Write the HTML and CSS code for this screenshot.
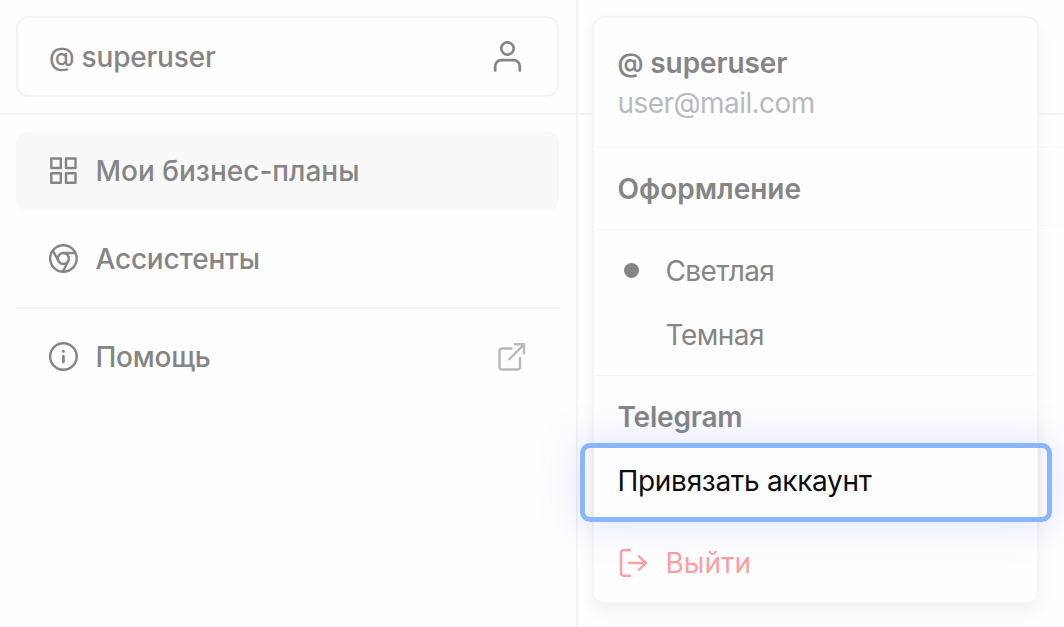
FILE: index.html
```html
<!DOCTYPE html>
<html lang="ru">
<head>
<meta charset="utf-8">
<title>Мои бизнес-планы</title>
<link rel="stylesheet" href="styles.css">
</head>
<body>
<div class="app">
  <aside class="sidebar">
    <header class="sidebar-head">
      <button class="account">
        <span class="t-account"><span class="at">@</span> superuser</span>
        <svg class="icon-user" width="30" height="32" viewBox="0 0 30 32"><circle cx="14.500" cy="7.500" r="6.2"/><path d="M2.200 29.500v-4.300a6 6 0 0 1 6-6h12.600a6 6 0 0 1 6 6v4.300"/></svg>
      </button>
    </header>
    <nav class="nav">
      <a class="nav-item active">
        <svg class="icon" width="30" height="30" viewBox="0 0 30 30"><path d="M3.300 2.500h9.500V12H3.300zM18 2.500h9.500V12H18zM3.300 17.200h9.500v9.500H3.300zM18 17.200h9.500v9.500H18z"/></svg>
        <span class="t-plans">Мои бизнес-планы</span>
      </a>
      <a class="nav-item">
        <svg class="icon" width="30" height="30" viewBox="0 0 30 30"><circle cx="15.400" cy="14.500" r="13.3"/><circle cx="15.400" cy="14.500" r="5.500"/><path d="M15.400 9H27.300M10.600 17.300L5 6.800M20.200 17.300l-5.300 10.300"/></svg>
        <span class="t-assist">Ассистенты</span>
      </a>
      <hr class="nav-line">
      <a class="nav-item">
        <svg class="icon" width="30" height="30" viewBox="0 0 30 30"><circle cx="15.400" cy="14.500" r="13.3"/><path d="M15.400 14v6" stroke-width="2.7"/><circle class="dot" cx="15.400" cy="9.3" r="1.5"/></svg>
        <span class="t-help">Помощь</span>
        <svg class="icon-ext" width="30" height="30" viewBox="0 0 30 30"><path d="M15.400 6.500H6A2.500 2.500 0 0 0 3.500 9v16A2.500 2.500 0 0 0 6 27.500h15.500A2.500 2.500 0 0 0 24 25v-9M19 2.300h9v9M27.500 2.800L13 17.500"/></svg>
      </a>
    </nav>
  </aside>
  <main class="content">
    <div class="row row-head"></div>
    <div class="row row-sub"></div>
    <div class="row row-list"></div>
  </main>
</div>
<div class="menu">
  <div class="profile">
    <div class="name"><span class="t-name"><span class="at">@</span> superuser</span></div>
    <div class="mail"><span class="t-mail">user@mail.com</span></div>
  </div>
  <div class="title"><span class="t-look">Оформление</span></div>
  <div class="themes">
    <div class="option"><i class="bullet"></i><span class="t-light">Светлая</span></div>
    <div class="option"><i class="bullet off"></i><span class="t-dark">Темная</span></div>
  </div>
  <div class="telegram"><span class="t-tg">Telegram</span></div>
  <div class="link"><div class="focus"></div><span class="t-link">Привязать аккаунт</span></div>
  <div class="logout">
    <svg class="icon-out" width="30" height="30" viewBox="0 0 30 30"><path d="M12 2.300H5.500A2.500 2.500 0 0 0 3 4.800v20.400a2.500 2.500 0 0 0 2.500 2.500H12M11 15H28M21 8.300l7 6.700-7 6.700"/></svg>
    <span class="t-out">Выйти</span>
  </div>
</div>
</body>
</html>
```
FILE: styles.css
```css
* { box-sizing: border-box; }
body {
  margin: 0;
  position: relative;
  height: 627px;
  overflow: hidden;
  background: #fefefe;
  color: #858585;
  font: 500 28px/40px Inter, "Noto Sans", sans-serif;
}
span { white-space: nowrap; }
svg { display: block; flex: none; fill: none; stroke: currentColor; stroke-width: 2.4; stroke-linecap: round; stroke-linejoin: round; }
.dot { fill: currentColor; stroke: none; }
.app { display: flex; height: 627px; }
.sidebar { width: 578px; border-right: 2px solid #f2f2f2; flex: none; }
.sidebar-head { height: 114.500px; padding: 16px; border-bottom: 2px solid #f3f3f3; }
.account {
  display: flex; align-items: center; justify-content: space-between;
  width: 543px; height: 81px; padding: 0 34px 0 32px;
  border: 2px solid #f3f3f3; border-radius: 12px;
  background: transparent; color: inherit; font: inherit;
}
.icon-user { stroke-width: 2.7; }
.nav { padding: 16px 17px 0 16px; }
.nav-item { display: flex; align-items: center; gap: 18px; height: 80px; margin-bottom: 8px; padding: 0 32px; border-radius: 12px; }
.nav-item.active { background: #f8f8f8; }
.nav-line { width: 544px; height: 2px; margin: 0 0 8px; border: 0; background: #f2f2f2; }
.icon-ext { margin: 0 1.500px 0 auto; color: #b9b9bd; }
.content { flex: 1; }
.row { margin-left: 20px; border-bottom: 1px solid #f5f5f5; }
.row-head { height: 114.500px; margin-left: 0; border-bottom: 2px solid #f3f3f3; }
.row-sub { height: 33px; }
.row-list { height: 78px; }

.at { font-size: 26px; line-height: 1; vertical-align: 1px; }
.t-account { margin-left: -1px; letter-spacing: -.2px; }
.t-assist { letter-spacing: -.2px; }
.t-help { letter-spacing: -.25px; }
.t-plans, .t-assist, .t-help { margin-left: -.5px; }
.t-name { letter-spacing: -.1px; }
.t-mail { letter-spacing: -.55px; }
.t-light { letter-spacing: -.6px; }
.t-dark { letter-spacing: -.5px; }
.t-tg { letter-spacing: -.2px; }

.menu {
  position: absolute; left: 592px; top: 16px; width: 447px; height: 588px;
  border: 2px solid #f4f4f4; border-radius: 12px;
  background: #fefefe;
  box-shadow: 0 8px 16px rgba(0,0,0,.055);
}
.profile { height: 130px; padding: 25px 23.500px 0; border-bottom: 1px solid #f5f5f5; }
.name, .title, .telegram { font-weight: 600; }
.mail { color: #b9b9be; font-weight: 400; }
.title { height: 82px; padding: 21px 23.500px 0; border-bottom: 1px solid #f5f5f5; }
.themes { height: 146px; padding: 9px 0 0 29.500px; border-bottom: 1px solid #f5f5f5; font-weight: 400; }
.option { display: flex; align-items: center; gap: 27px; height: 64px; }
.bullet { width: 15px; height: 15px; margin-top: -1px; border-radius: 50%; background: #858585; }
.bullet.off { background: none; }
.telegram { height: 67px; padding: 21px 23.500px 0; }
.link { position: relative; height: 78px; padding: 18px 23.500px 0; color: #0c0c0e; font-weight: 400; }
.focus {
  position: absolute; left: -14px; top: 0; width: 471.500px; height: 79px;
  border: 5px solid #89b6ff; border-radius: 10px;
  background:
    linear-gradient(90deg, #fafafa, #eee 7px, #e6e6e6 8px, transparent 9px) 0 0 / 9px 100% no-repeat,
    linear-gradient(270deg, #fafafa, #eee 7px, #e6e6e6 8px, transparent 9px) 100% 0 / 9px 100% no-repeat;
  box-shadow: 0 0 44px rgba(94,120,255,.21);
}
.t-link { position: relative; letter-spacing: -.3px; }
.logout { display: flex; align-items: center; gap: 18px; height: 81px; padding: 2px 23.500px 0; color: #f9a0a0; font-weight: 400; }
```
